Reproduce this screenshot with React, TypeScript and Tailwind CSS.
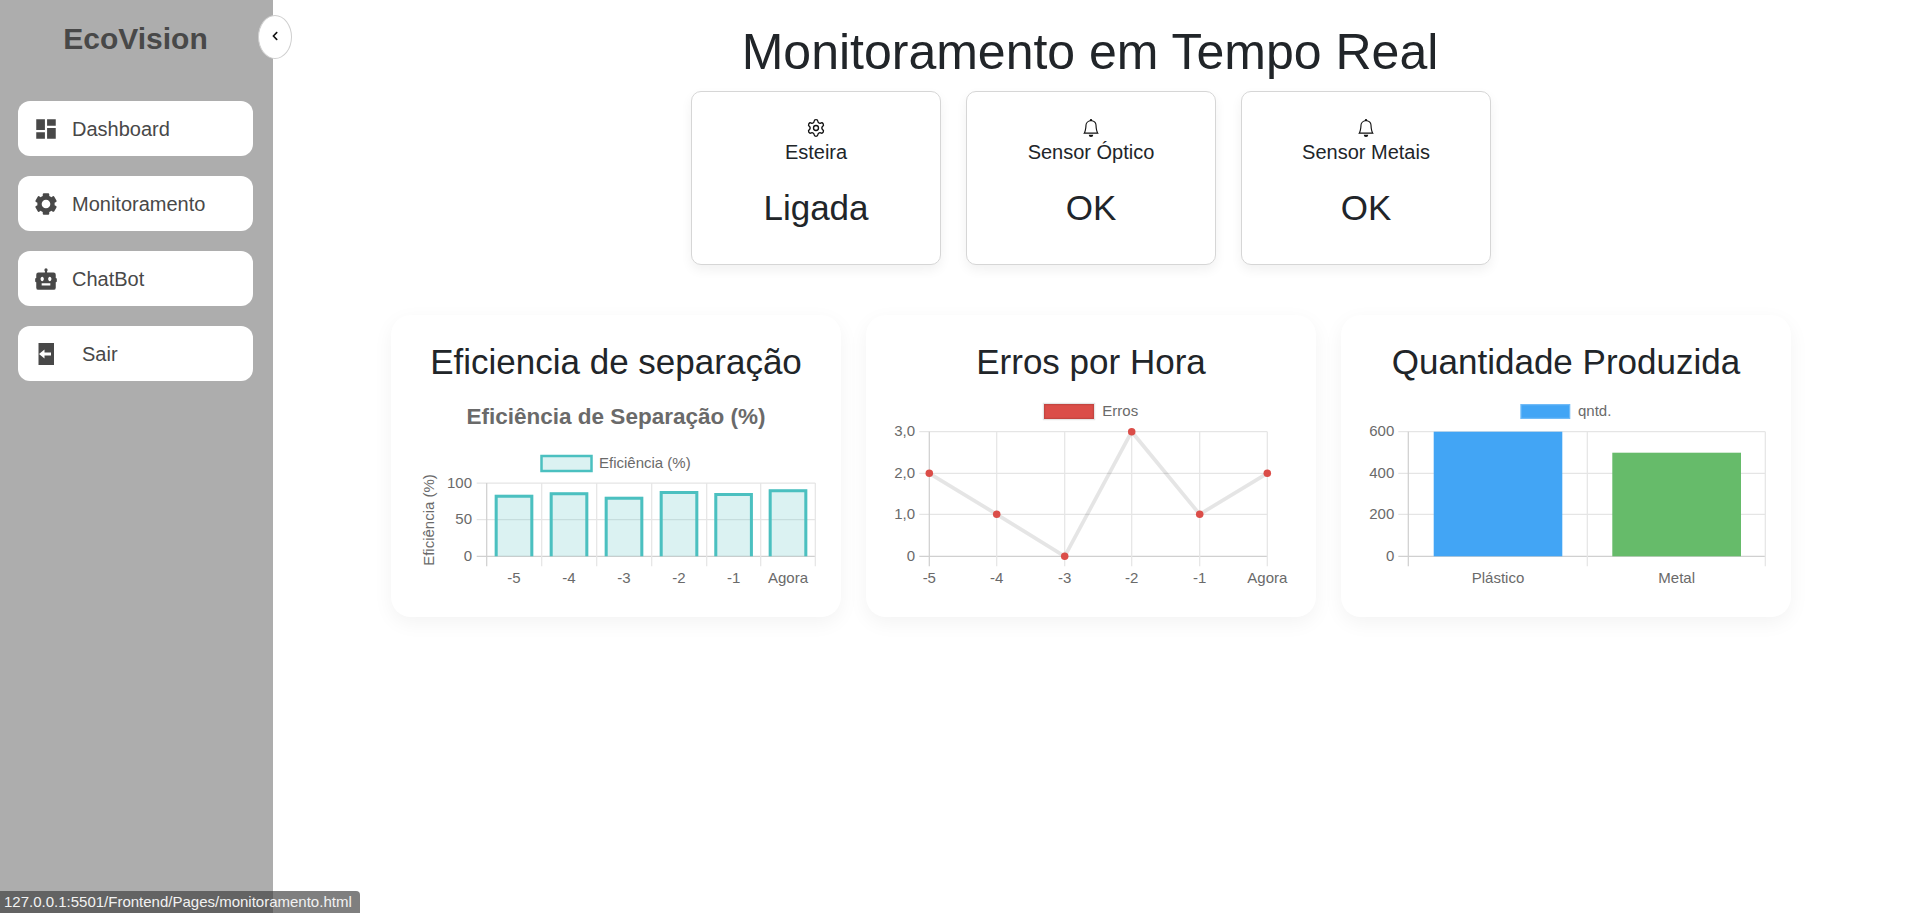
import type { ReactNode } from 'react'
import { Settings } from 'lucide-react'
import { BsBell } from 'react-icons/bs'
import { BiSolidBot, BiSolidCog } from 'react-icons/bi'
import { MdDashboard } from 'react-icons/md'
import { FaChevronLeft } from 'react-icons/fa'

const FONT = '"Liberation Sans", Arial, sans-serif'
const GRID = '#e5e5e5'
const AXIS = '#d0d0d0'
const TEXT = '#6a6a6a'

function ExitIcon() {
  return (
    <svg width="26" height="26" viewBox="0 0 26 26">
      <path d="M5.5 2h15.5v22H5.500z" fill="#484848" />
      <path d="M6 13l5.500-4.500v3H18v3h-6.500v3z" fill="#ffffff" />
    </svg>
  )
}

const navItems = [
  { label: 'Dashboard', icon: <MdDashboard size={26} />, gap: 'gap-[13px]' },
  { label: 'Monitoramento', icon: <BiSolidCog size={26} />, gap: 'gap-[13px]' },
  { label: 'ChatBot', icon: <BiSolidBot size={26} />, gap: 'gap-[13px]' },
  { label: 'Sair', icon: <ExitIcon />, gap: 'gap-[23px]' },
]

function Sidebar() {
  return (
    <aside className="w-[273px] shrink-0 bg-[#adadad] pt-[21px] pl-[18px] pr-[20px]">
      <h2 className="text-center text-[30px] leading-[36px] font-bold text-[#484848]">EcoVision</h2>
      <nav className="mt-[44px] flex flex-col gap-5">
        {navItems.map((item) => (
          <a
            key={item.label}
            className={`flex h-[55px] items-center rounded-[12px] bg-white pl-[15px] text-[20px] text-[#484848] ${item.gap}`}
          >
            {item.icon}
            <span>{item.label}</span>
          </a>
        ))}
      </nav>
    </aside>
  )
}

function StatusCard({ icon, label, value }: { icon: ReactNode; label: string; value: string }) {
  return (
    <div className="flex h-[174px] w-[250px] flex-col items-center rounded-[10px] border border-[#d6d6d6] bg-white pt-[27px] text-[#212529] shadow-[0_5px_12px_rgba(0,0,0,0.06)]">
      <div className="flex h-[18px] items-center text-[#111111]">{icon}</div>
      <p className="mt-[3px] text-[20px] leading-[24px]">{label}</p>
      <p className="mt-[23px] text-[35px] leading-[42px]">{value}</p>
    </div>
  )
}

function ChartCard({ title, children }: { title: string; children: ReactNode }) {
  return (
    <div className="h-[302px] w-[450px] rounded-[20px] bg-white px-[25px] pt-[26px] shadow-[0_6px_20px_rgba(0,0,0,0.05)]">
      <h3 className="text-center text-[35px] leading-[42px] text-[#212529]">{title}</h3>
      <div className="mt-[6px] h-[200px] w-[400px]">{children}</div>
    </div>
  )
}

// shared chart.js look: grid, tick marks and labels
function Axes({
  xs,
  ys,
  yLabels,
  xLabels,
  labelRight,
}: {
  xs: number[]
  ys: number[]
  yLabels: string[]
  xLabels: { x: number; text: string }[]
  labelRight: number
}) {
  const left = xs[0]
  const right = xs[xs.length - 1]
  const bottom = ys[ys.length - 1]
  const top = ys[0]
  return (
    <g>
      {ys.map((y, i) => (
        <line
          key={y}
          x1={left - 10}
          x2={right}
          y1={y}
          y2={y}
          stroke={i === ys.length - 1 ? AXIS : GRID}
          strokeWidth="1.25"
        />
      ))}
      {xs.map((x, i) => (
        <line key={x} x1={x} x2={x} y1={top} y2={bottom + 10} stroke={i === 0 ? AXIS : GRID} strokeWidth="1.25" />
      ))}
      {yLabels.map((t, i) => (
        <text key={t} x={labelRight} y={ys[i] + 4.5} textAnchor="end" fontSize="15" fill={TEXT} fontFamily={FONT}>
          {t}
        </text>
      ))}
      {xLabels.map((l) => (
        <text key={l.text} x={l.x} y={194} textAnchor="middle" fontSize="15" fill={TEXT} fontFamily={FONT}>
          {l.text}
        </text>
      ))}
    </g>
  )
}

function Legend({
  x,
  y,
  fill,
  stroke,
  text,
  textX,
}: {
  x: number
  y: number
  fill: string
  stroke: string
  text: string
  textX: number
}) {
  return (
    <g>
      <rect x={x} y={y} width="50" height="15" fill={fill} stroke={stroke} strokeWidth="2.5" />
      <text x={textX} y={y + 11.500} fontSize="15" fill={TEXT} fontFamily={FONT}>
        {text}
      </text>
    </g>
  )
}

const efficiencyBars = [
  { x: 78.7, w: 38.600, top: 106.7, label: '-5' },
  { x: 133.7, w: 38.600, top: 104.3, label: '-4' },
  { x: 188.7, w: 38.600, top: 108.7, label: '-3' },
  { x: 243.7, w: 38.600, top: 103, label: '-2' },
  { x: 298.3, w: 38.600, top: 105, label: '-1' },
  { x: 352.700, w: 38.600, top: 101.3, label: 'Agora' },
]

function EfficiencyChart() {
  const bottom = 167.3
  return (
    <svg width="400" height="200" viewBox="0 0 400 200">
      <text x="200" y="35" textAnchor="middle" fontSize="22.5" fontWeight="bold" fill={TEXT} fontFamily={FONT}>
        Eficiência de Separação (%)
      </text>
      <Legend x={125.500} y={67} fill="rgba(75,192,192,0.2)" stroke="#4bc0c0" text="Eficiência (%)" textX={183} />
      <text
        transform="translate(18 131) rotate(-90)"
        textAnchor="middle"
        fontSize="15"
        fill={TEXT}
        fontFamily={FONT}
      >
        Eficiência (%)
      </text>
      <Axes
        xs={[70.7, 125.7, 180.7, 235.7, 290.7, 344.7, 399.3]}
        ys={[94, 130.5, bottom]}
        yLabels={['100', '50', '0']}
        xLabels={efficiencyBars.map((b) => ({ x: b.x + b.w / 2, text: b.label }))}
        labelRight={56}
      />
      {efficiencyBars.map((b) => (
        <g key={b.label}>
          <rect x={b.x} y={b.top - 1} width={b.w} height={bottom - b.top + 1} fill="rgba(75,192,192,0.2)" />
          {/* chart.js keeps the border inside the bar */}
          <path
            d={`M${b.x + 1.5} ${bottom}V${b.top + 0.5}H${b.x + b.w - 1.5}V${bottom}`}
            fill="none"
            stroke="#4bc0c0"
            strokeWidth="3"
          />
        </g>
      ))}
    </svg>
  )
}

function ErrorsChart() {
  const xs = [38.3, 105.7, 173.7, 240.7, 308.7, 376.3]
  const ys = [42.7, 84.3, 125.3, 167.3]
  const values = [1, 2, 3, 0, 2, 1]
  const labels = ['-5', '-4', '-3', '-2', '-1', 'Agora']
  const points = xs.map((x, i) => ({ x, y: ys[values[i]] }))
  return (
    <svg width="400" height="200" viewBox="0 0 400 200" className="overflow-visible">
      <Legend x={153} y={15} fill="#db4d48" stroke="rgba(0,0,0,0.1)" text="Erros" textX={211.300} />
      <Axes
        xs={xs}
        ys={ys}
        yLabels={['3,0', '2,0', '1,0', '0']}
        xLabels={labels.map((text, i) => ({ x: xs[i], text }))}
        labelRight={24}
      />
      <polyline
        points={points.map((p) => `${p.x},${p.y}`).join(' ')}
        fill="none"
        stroke="rgba(0,0,0,0.1)"
        strokeWidth="3.75"
      />
      {points.map((p) => (
        <circle key={p.x} cx={p.x} cy={p.y} r="3.75" fill="#db4d48" />
      ))}
    </svg>
  )
}

function QuantityChart() {
  const ys = [42.7, 84.3, 125.3, 167.3]
  return (
    <svg width="400" height="200" viewBox="0 0 400 200" className="overflow-visible">
      <Legend x={154.300} y={15} fill="#42a5f5" stroke="rgba(255,255,255,0.25)" text="qntd." textX={212} />
      <Axes
        xs={[42.3, 221.3, 399.3]}
        ys={ys}
        yLabels={['600', '400', '200', '0']}
        xLabels={[
          { x: 132, text: 'Plástico' },
          { x: 310.700, text: 'Metal' },
        ]}
        labelRight={28.300}
      />
      <rect x="67.700" y="42.7" width="128.600" height="124.600" fill="#42a5f5" />
      <rect x="246.300" y="63.7" width="128.700" height="103.600" fill="#66bb6a" />
    </svg>
  )
}

export default function App() {
  return (
    <div className="relative flex h-[913px] overflow-hidden bg-white font-['Liberation_Sans',Arial,sans-serif]">
      <Sidebar />

      {/* toggle button over the sidebar edge */}
      <button className="absolute left-[258px] top-[15px] flex h-[44px] w-[34px] items-center justify-center rounded-[50%] border border-[#cfcfcf] bg-white pb-[3px]">
        <FaChevronLeft size={10} className="text-[#111111]" />
      </button>

      <main className="flex-1 pt-[22px]">
        <h1 className="text-center text-[50px] leading-[60px] text-[#212529]">Monitoramento em Tempo Real</h1>

        <div className="mt-[9px] flex justify-center gap-[25px] pl-[2px]">
          <StatusCard icon={<Settings size={20} strokeWidth={1.6} />} label="Esteira" value="Ligada" />
          <StatusCard icon={<BsBell size={18} />} label="Sensor Óptico" value="OK" />
          <StatusCard icon={<BsBell size={18} />} label="Sensor Metais" value="OK" />
        </div>

        <div className="mt-[50px] flex justify-center gap-[25px] pl-[2px]">
          <ChartCard title="Eficiencia de separação">
            <EfficiencyChart />
          </ChartCard>
          <ChartCard title="Erros por Hora">
            <ErrorsChart />
          </ChartCard>
          <ChartCard title="Quantidade Produzida">
            <QuantityChart />
          </ChartCard>
        </div>
      </main>

      {/* browser link status bubble */}
      <div className="absolute bottom-0 left-0 flex h-[22px] w-[360px] items-center rounded-tr-[4px] bg-[rgba(60,60,60,0.66)] pl-[4px] text-[15px] text-[#f2f2f2]">
        127.0.0.1:5501/Frontend/Pages/monitoramento.html
      </div>
    </div>
  )
}
